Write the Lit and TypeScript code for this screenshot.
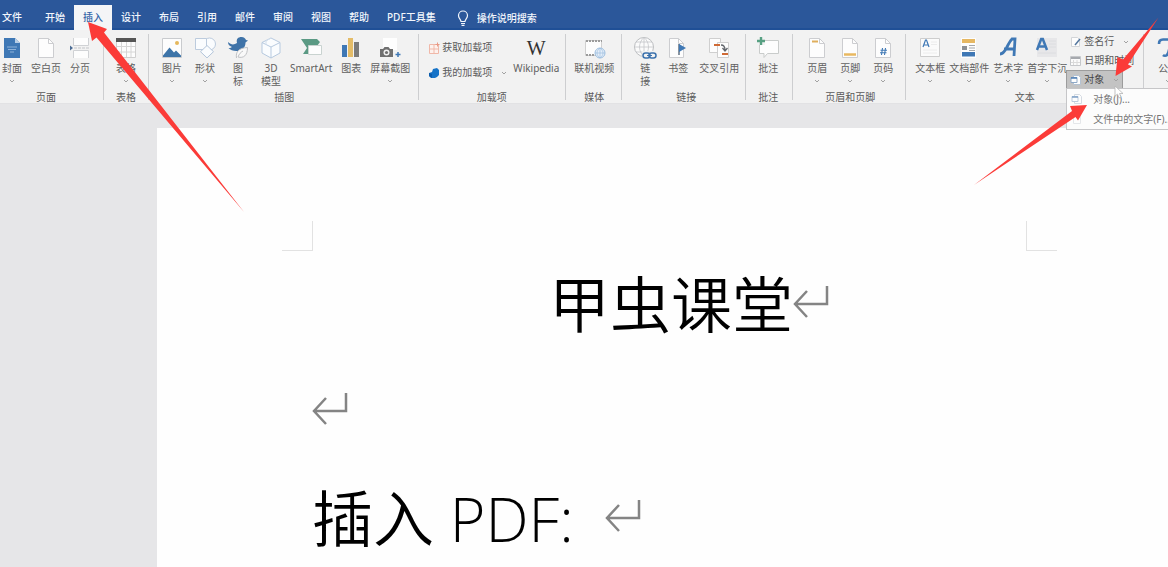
import { LitElement, html, svg, css, nothing } from "lit";
import { customElement, property, state } from "lit/decorators.js";

const page = (x: number, y: number, w: number, h: number) => svg`
  <path d="M${x} ${y}h${w - 5}l5 5v${h - 5}h${-w}z" fill="#fdfdfd" stroke="#cccdd0"/>
  <path d="M${x + w - 5} ${y}v5h5" fill="none" stroke="#cccdd0"/>`;

const ICONS: Record<string, unknown> = {
  cover: svg`<path d="M4 2h11l5 5v15H4z" fill="#3f78b5"/><path d="M15 2l5 5h-5z" fill="#b9cfe6"/>
    <path d="M7 11h10M8 13.500h8M10 16h4" stroke="#8fb2d8"/>`,
  blank: page(4.5, 2.5, 15, 19),
  pagebreak: svg`<path d="M5.500 2v7.500h15V2M5.500 22v-7.500h15V22" fill="#fdfdfd" stroke="#d0d2d5"/>
    <path d="M6 12h16" stroke="#c3c5c9" stroke-dasharray="3 1"/><path d="M2 9.500l3 2.500-3 2.500z" fill="#4c6c94"/>`,
  table: svg`<path d="M2.500 2.500h19v19h-19z" fill="#fdfdfd" stroke="#cfcfcf"/>
    <path d="M7.500 5v16M12.500 5v16M17 5v16M3 10.500h18M3 16h18" stroke="#d6d6d6"/><path d="M2 2h20v4H2z" fill="#555"/>`,
  picture: svg`<path d="M2.500 2.500h19v19h-19z" fill="#fdfdfd" stroke="#c9cbce"/>
    <circle cx="17" cy="7" r="2" fill="#e5b75c"/><path d="M3 19.500l6.500-8 4.500 5 2-2 5 5v1.500H3z" fill="#3d74a8"/>`,
  shapes: svg`<circle cx="16.500" cy="8" r="6" fill="#fafcfe" stroke="#bccbdd"/>
    <path d="M2.500 2.500h11v11h-11z" fill="#fafcfe" stroke="#bccbdd"/>
    <path d="M14 9.500l6.500 6.200-6.500 6.200-6.500-6.200z" fill="#fafcfe" stroke="#b3c5da"/>`,
  bird: svg`<path d="M2 6c3 3 6 3 9 1-1-4 1-6 4.500-6 2.500 0 4 1.500 4.500 3l2 .5-2.500 2c0 5-3 8-8 8.500-4 .3-7-1-9-3 2 0 3-.5 3.500-1C3 10 2 8 2 6z" fill="#3f73a8"/>
    <path d="M10.500 22c-1-6 2-10 11-10.500 0 8-4 11-9.500 9.500 1-3 3-5 5-6" fill="#f9f9f9" stroke="#bfc1c4"/>`,
  cube: svg`<path d="M12 2l9 4.500v10.500l-9 5-9-5V6.500z" fill="#fafcfe" stroke="#b6c9df"/>
    <path d="M3 6.500l9 4.500 9-4.500M12 11v11" fill="none" stroke="#b6c9df"/><path d="M7 9V5l5-3" fill="none" stroke="#d2deec"/>`,
  smartart: svg`<path d="M2 3h16l3 3-3 4h-7v8H4l4-6z" fill="#5b9a84"/>
    <path d="M9.500 9.500h13v9h-13z" fill="#fdfdfd" stroke="#c9d3d0"/>`,
  chart: svg`<path d="M3 9h5v12H3z" fill="#3f78b5"/><path d="M9 2h5v19H9z" fill="#e4bc68"/><path d="M15 6h5v15h-5z" fill="#7b7b7b"/>`,
  screenshot: svg`<path d="M5 2h14v12H5z" fill="#fefefe"/>
    <path d="M2 13h3l1.500-2h4l1.500 2h3v8H2z" fill="#707070"/><circle cx="8.500" cy="16.500" r="3" fill="#f3f3f3"/><circle cx="8.500" cy="16.500" r="1.600" fill="#707070"/>
    <path d="M20 16v5M17.500 18.500h5" stroke="#3f78b5" stroke-width="1.500"/>`,
  video: svg`<path d="M3.500 4.500h16v15h-16z" fill="#fdfdfd" stroke="#d0d0d0"/>
    <path d="M4 5h16M4 19h16" stroke="#9b9b9b" stroke-width="2" stroke-dasharray="2 1"/>
    <circle cx="18" cy="17" r="5" fill="#e5eff9" stroke="#9dbfe0"/><path d="M13 17h10M18 12v10M18 12c-4 3-4 7 0 10M18 12c4 3 4 7 0 10" fill="none" stroke="#9dbfe0" stroke-width=".7"/>`,
  link: svg`<circle cx="11" cy="11" r="9.500" fill="#fbfbfb" stroke="#bcbec1"/>
    <path d="M1.500 11h19M3 6h16M3 16h16M11 1.500v19M11 1.500c-6 5-6 14 0 19M11 1.500c6 5 6 14 0 19" fill="none" stroke="#c5c7ca" stroke-width=".8"/>
    <rect x="9" y="15" width="15" height="9" fill="#f2f2f2"/>
    <rect x="10" y="17" width="7" height="5" rx="2.500" fill="none" stroke="#3c72ad" stroke-width="1.500"/>
    <rect x="16" y="17" width="7" height="5" rx="2.500" fill="none" stroke="#3c72ad" stroke-width="1.500"/><path d="M14 19.500h5" stroke="#3c72ad"/>`,
  bookmark: svg`${page(3.5, 2.5, 14, 19)}<path d="M13 8v11" stroke="#5f6f80" stroke-width="1.500"/><path d="M13 8l7 4-7 4z" fill="#3f78b5"/>`,
  crossref: svg`<path d="M2.500 2.500h11v14h-11z" fill="#fdfdfd" stroke="#cfcfcf"/><path d="M10.500 6.500h11v15h-11z" fill="#fdfdfd" stroke="#cfcfcf"/>
    <path d="M7 9h6M15 18h6" stroke="#cf6a35" stroke-width="2"/><path d="M14 9c3 0 4 2 4 5M15.500 12l2.500 3 2.500-3" fill="none" stroke="#62666c" stroke-width="1.300"/>`,
  comment: svg`<path d="M3.500 4.500h19v13h-11l-3.500 4v-4h-4.500z" fill="#fdfdfd" stroke="#c9cccb"/>
    <path d="M0 0h9v9H0z" fill="#f2f2f2"/><path d="M5 1v8M1 5h8" stroke="#57a082" stroke-width="2.400"/>`,
  header: svg`${page(4.5, 2.5, 15, 19)}<path d="M7 5.500h6" stroke="#dfae5c" stroke-width="2"/>`,
  footer: svg`${page(4.5, 2.5, 15, 19)}<path d="M6 18.500h12" stroke="#e8b860" stroke-width="2.500"/>`,
  number: svg`${page(4.5, 2.5, 15, 19)}<path d="M11.500 12l-1 7M14.500 12l-1 7M9.500 14.200H16M9 16.800h6.500" stroke="#3f78b5" stroke-width="1.100"/>`,
  textbox: svg`<path d="M2.500 2.500h19v18h-19z" fill="#fbfbfb" stroke="#cdcdcd"/><path d="M5 11l2.500-7h1L11 11M6 9h4" fill="none" stroke="#3f78b5" stroke-width="1.200"/><path d="M13 6h6M13 8.500h6M5 14h14M5 17h14" stroke="#ececec"/>`,
  parts: svg`<path d="M4 2h15v20H4z" fill="#fdfdfd"/><path d="M5 3h13v4H5z" fill="#e6b863"/><path d="M5 16h13v4.500H5z" fill="#3f78b5"/>
    <path d="M5 10h5v4H5z" fill="#8d9196"/><path d="M12 9.500h6M12 12h6M12 14.500h6" stroke="#a3a7ac"/>`,
  wordart: svg`<path d="M4 18c3 0 5-3 7-7 1.500-3 3-6 5-8h3l-1 17M8 13h10.500" fill="none" stroke="#3f78b5" stroke-width="2.800"/>`,
  dropcap: svg`<path d="M2 2h20v19H2z" fill="#e7e7e9"/><path d="M2 14l4.200-11h1.600L12 14M4 10.500h6" fill="none" stroke="#3f78b5" stroke-width="2.500"/>
    <path d="M14 5h7M14 8h7M14 11h7M3 17h18" stroke="#dcdde0"/>`,
  formula: svg`<path d="M3 8c0-3 1-4.500 4-4.500h15M14 4c0 6-1 12-3 15-1 1-3 1-4 0" fill="none" stroke="#3f78b5" stroke-width="2.600"/>`,
};

const SMALL: Record<string, unknown> = {
  store: svg`<path d="M1.500 2.500h9v9h-9zM6 2.500v9M1.500 7h9" fill="#fdf2ee" stroke="#f0b8a9"/><path d="M9.500.500v4M7.500 2.500h4" stroke="#e99a86"/>`,
  addin: svg`<path d="M5 2l4-1 2 2v5l-2 2-2 1H3L1 9V6l3-1z" fill="#1673c7"/><path d="M1 6l3 1v4l-3-2z" fill="#0d5cab"/>`,
  sign: svg`<path d="M1.500 1.500h6l2 2v7h-8z" fill="#fdfdfd" stroke="#d3d5d8"/><path d="M5 9l5-6" stroke="#54779f" stroke-width="1.500"/>`,
  date: svg`<path d="M.500 1.500h10v9h-10z" fill="#fbfbfb" stroke="#c5c7ca"/><path d="M1 3h9" stroke="#a6a9ae" stroke-width="2"/><path d="M3.500 5v5M7 5v5M1 7.500h9" stroke="#dadada"/>`,
  object: svg`<path d="M3.500 1.500h5l2 2v7h-7z" fill="#fdfdfd" stroke="#b4c2d2"/><path d="M1 3.500h6v5H1z" fill="#fdfdfd" stroke="#8ea9c8"/><path d="M1 4h6" stroke="#4f7fb4" stroke-width="1.500"/>`,
  menuobject: svg`<path d="M3.500 1.500h5l2 2v7h-7z" fill="#fdfdfd" stroke="#d5dbe2"/><path d="M1 3.500h6v5H1z" fill="#fdfdfd" stroke="#bccbdd"/><path d="M1 4h6" stroke="#7fa0c6" stroke-width="1.500"/>`,
  file: svg`<path d="M2.500 1.500h5l2 2v7h-7z" fill="#fdfdfd" stroke="#e4e6e9"/>`,
};

const chevron = html`<svg class="chevron" viewBox="0 0 6 4" aria-hidden="true"><path d="M1 1l2 2 2-2" fill="none" stroke="#a2a2a2"/></svg>`;

@customElement("ribbon-button")
class RibbonButton extends LitElement {
  @property() icon = "";
  @property() label = "";
  @property({ type: Boolean }) menu = false;

  static styles = css`
    :host { display: block; flex: none; }
    button {
      display: flex; flex-direction: column; align-items: center;
      min-width: var(--button-width, 24px); padding: 0; border: 0; background: none;
      color: #606060; font: 10px/13px "Noto Sans", "Noto Sans CJK SC", sans-serif;
    }
    .icon { width: 24px; height: 24px; margin-bottom: 2px; }
    .label { white-space: pre; }
    .chevron { width: 6px; height: 4px; margin-top: 4px; }
    .wiki { font: 20px/24px "Liberation Serif", serif; color: #333; margin-bottom: 2px; }
  `;

  render() {
    return html`<button type="button">
      ${this.icon === "wiki"
        ? html`<span class="wiki" aria-hidden="true">W</span>`
        : html`<svg class="icon" viewBox="0 0 24 24" aria-hidden="true">${ICONS[this.icon]}</svg>`}
      <span class="label">${this.label}</span>
      ${this.menu ? chevron : nothing}
    </button>`;
  }
}

@customElement("ribbon-row")
class RibbonRow extends LitElement {
  @property() icon = "";
  @property() label = "";
  @property({ type: Boolean }) menu = false;
  @property({ type: Boolean }) pressed = false;

  static styles = css`
    :host { display: block; }
    button {
      display: flex; align-items: center; gap: 2px; height: 19px; width: 100%;
      padding: 0 3px; border: 1px solid transparent; background: none; white-space: nowrap;
      color: #5a5a5a; font: 10px/13px "Noto Sans", "Noto Sans CJK SC", sans-serif;
    }
    .pressed { width: 57px; background: #c3c3c3; border-color: #9c9c9c; color: #444; }
    .icon { width: 12px; height: 12px; flex: none; }
    .chevron { width: 6px; height: 4px; margin-left: 7px; flex: none; }
    .pressed .chevron { margin-left: auto; }
  `;

  render() {
    return html`<button type="button" class=${this.pressed ? "pressed" : ""}>
      <svg class="icon" viewBox="0 0 12 12" aria-hidden="true">${SMALL[this.icon]}</svg>
      <span>${this.label}</span>${this.menu ? chevron : nothing}
    </button>`;
  }
}

const TABS = ["开始", "插入", "设计", "布局", "引用", "邮件", "审阅", "视图", "帮助", "PDF工具集"];

const big = (icon: string, label: string, menu = false) =>
  html`<ribbon-button .icon=${icon} .label=${label} .menu=${menu}></ribbon-button>`;
const row = (icon: string, label: string, menu = false, pressed = false) =>
  html`<ribbon-row .icon=${icon} .label=${label} .menu=${menu} .pressed=${pressed}></ribbon-row>`;
const group = (name: string, cls: string, content: unknown) =>
  html`<section class="group ${cls}" aria-label=${name}><div class="tools">${content}</div><div class="name">${name}</div></section>`;

const mark = html`<svg class="mark" viewBox="0 0 36 32" aria-hidden="true">
  <path d="M34 0v18H2M14 5L2 18 14 31" fill="none" stroke="#848484" stroke-width="2.500"/></svg>`;

@customElement("app-root")
class AppRoot extends LitElement {
  @state() private active = "插入";

  static styles = css`
    :host {
      display: flex; flex-direction: column; position: relative; min-height: 100vh; overflow: hidden;
      background: #e6e6e8; color: #5a5a5a; font: 10px/13px "Noto Sans", "Noto Sans CJK SC", sans-serif;
    }
    .tabs { display: flex; align-items: flex-end; height: 30px; background: #2b579a; box-shadow: inset 0 -2px #1f4f96; }
    .tab {
      height: 25px; padding: 0 9px; border: 0; background: none; white-space: nowrap;
      color: #f2f6fc; font: 500 10px/25px "Noto Sans", "Noto Sans CJK SC", sans-serif;
    }
    .file { padding: 0 14px 0 2px; }
    .active { background: #f4f5f7; color: #3565a8; }
    .tell { display: flex; align-items: center; gap: 8px; height: 25px; padding-left: 12px; }
    .bulb { width: 12px; height: 16px; }
    .tell input {
      width: 120px; padding: 0; border: 0; background: none; outline: none; color: #f2f6fc;
      font: 500 10px/16px "Noto Sans", "Noto Sans CJK SC", sans-serif;
    }
    .tell input::placeholder { color: #f2f6fc; opacity: 1; }

    .ribbon { display: flex; height: 74px; box-sizing: border-box; background: #f2f2f2; border-bottom: 1px solid #e2e2e4; }
    .group { position: relative; display: flex; flex-direction: column; flex: none; padding: 6px 11px 0 10px; }
    .group::after { content: ""; position: absolute; right: 0; top: 4px; bottom: 3px; width: 1px; background: #cdced0; }
    .tools { display: flex; gap: 9px; height: 56px; }
    .name { text-align: center; line-height: 12px; }
    .pages { margin-left: -12px; padding-left: 12px; padding-right: 12px; }
    .pages .tools { gap: 7px; }
    .pics { padding-left: 9px; padding-right: 9px; --button-width: 28px; }
    .pics .tools { gap: 5px; }
    .addins { padding-left: 5px; padding-right: 7px; }
    .addins .tools { gap: 2px; }
    .addrows { display: flex; flex-direction: column; gap: 6px; padding-top: 2px; }
    .media { padding-left: 8px; padding-right: 8px; }
    .links { padding-left: 11px; padding-right: 7px; }
    .comments { padding-left: 10px; padding-right: 13px; }
    .headers { padding-left: 12px; }
    .text { padding-left: 9px; padding-right: 10px; }
    .text .tools { gap: 4px; }
    .textrows { position: relative; width: 68px; margin: -4px 0 0 -5px; }
    .textrows ribbon-row { height: 19px; }
    .symbols { padding-left: 12px; }
    .menu {
      position: absolute; z-index: 1; left: 0; top: 56px; width: 120px;
      background: #fcfcfc; border: 1px solid #c6c6c8; box-sizing: border-box;
    }
    .item {
      display: flex; align-items: center; gap: 10px; width: 100%; height: 20px; padding: 0 4px; border: 0;
      background: none; color: #757575; white-space: nowrap; font: 10px/13px "Noto Sans", "Noto Sans CJK SC", sans-serif;
    }
    .item svg { width: 12px; height: 12px; flex: none; }
    .pointer { position: absolute; z-index: 2; left: 48px; top: 53px; width: 10px; height: 14px; }

    .workspace { flex: 1; display: flex; padding: 24px 0 0 157px; }
    .page { flex: 1; padding: 93px 142px 0 155px; background: #fefefe; }
    .corners { display: flex; justify-content: space-between; margin: 0 -31px 0 -30px; }
    .corner { width: 30px; height: 29px; border: 1px solid #e2e2e2; border-top: 0; }
    .corner.start { border-left: 0; }
    .corner.end { border-right: 0; }
    h1, p {
      display: flex; align-items: center; margin: 0; height: 107px; color: #000; white-space: pre;
      font: 350 61px/107px "Open Sans", "Noto Sans CJK SC", sans-serif;
    }
    h1 { justify-content: center; padding-left: 4px; }
    .mark { width: 36px; height: 32px; flex: none; margin-bottom: 6px; }
    h1 .mark { margin-right: -36px; }

    .arrows { position: absolute; z-index: 3; left: 0; top: 0; width: 1168px; height: 220px; pointer-events: none; }
  `;

  render() {
    return html`
      <nav class="tabs">
        <button type="button" class="tab file">文件</button>
        ${TABS.map((t) => html`<button type="button" class="tab ${t === this.active ? "active" : ""}" @click=${() => (this.active = t)}>${t}</button>`)}
        <label class="tell">
          <svg class="bulb" viewBox="0 0 12 16" role="img" aria-label="操作说明搜索"><path d="M4 11.500c0-2-2.500-3-2.500-6a4.500 4.500 0 0 1 9 0c0 3-2.500 4-2.500 6zM4 13.500h4M4.500 15.300h3" fill="none" stroke="#f2f6fc" stroke-width="1.200"/></svg>
          <input type="text" placeholder="操作说明搜索" />
        </label>
      </nav>
      <div class="ribbon">
        ${group("页面", "pages", [big("cover", "封面", true), big("blank", "空白页"), big("pagebreak", "分页")])}
        ${group("表格", "", big("table", "表格", true))}
        ${group("插图", "pics", [
          big("picture", "图片", true), big("shapes", "形状", true), big("bird", "图\n标"), big("cube", "3D\n模型"),
          big("smartart", "SmartArt"), big("chart", "图表"), big("screenshot", "屏幕截图", true),
        ])}
        ${group("加载项", "addins", [
          html`<div class="addrows">${row("store", "获取加载项")}${row("addin", "我的加载项", true)}</div>`,
          big("wiki", "Wikipedia"),
        ])}
        ${group("媒体", "media", big("video", "联机视频"))}
        ${group("链接", "links", [big("link", "链\n接"), big("bookmark", "书签"), big("crossref", "交叉引用")])}
        ${group("批注", "comments", big("comment", "批注"))}
        ${group("页眉和页脚", "headers", [big("header", "页眉", true), big("footer", "页脚", true), big("number", "页码", true)])}
        ${group("文本", "text", [
          big("textbox", "文本框", true), big("parts", "文档部件", true), big("wordart", "艺术字", true), big("dropcap", "首字下沉", true),
          html`<div class="textrows">
            ${row("sign", "签名行", true)}${row("date", "日期和时间")}${row("object", "对象", true, true)}
            <div class="menu">
              <button type="button" class="item"><svg viewBox="0 0 12 12" aria-hidden="true">${SMALL.menuobject}</svg>对象(J)...</button>
              <button type="button" class="item"><svg viewBox="0 0 12 12" aria-hidden="true">${SMALL.file}</svg>文件中的文字(F)...</button>
            </div>
            <svg class="pointer" viewBox="0 0 10 14" aria-hidden="true"><path d="M1 1v10l2.500-2 1.500 4 2-1-1.500-3.500H9z" fill="#fff" stroke="#b5b5b5" stroke-width=".8"/></svg>
          </div>`,
        ])}
        ${group("符号", "symbols", big("formula", "公式", true))}
      </div>
      <main class="workspace">
        <article class="page">
          <div class="corners"><div class="corner start"></div><div class="corner end"></div></div>
          <h1>甲虫课堂${mark}</h1>
          <p>${mark}</p>
          <p><span>插入 PDF:  </span>${mark}</p>
        </article>
      </main>
      <svg class="arrows" viewBox="0 0 1168 220" aria-hidden="true">
        <g fill="#fb3b38">
          <path d="M88 22L92 41 96.500 37.500 244 212 104 32.500 107 29z"/>
          <path d="M1115.500 76L1117.500 57 1123 59.500 1158.500 17.500 1128 64.500 1132 66.500z"/>
          <path d="M1087 105L1070 106 1072 111 974 185 1075.500 117 1078 120.500z"/>
        </g>
      </svg>
    `;
  }
}
